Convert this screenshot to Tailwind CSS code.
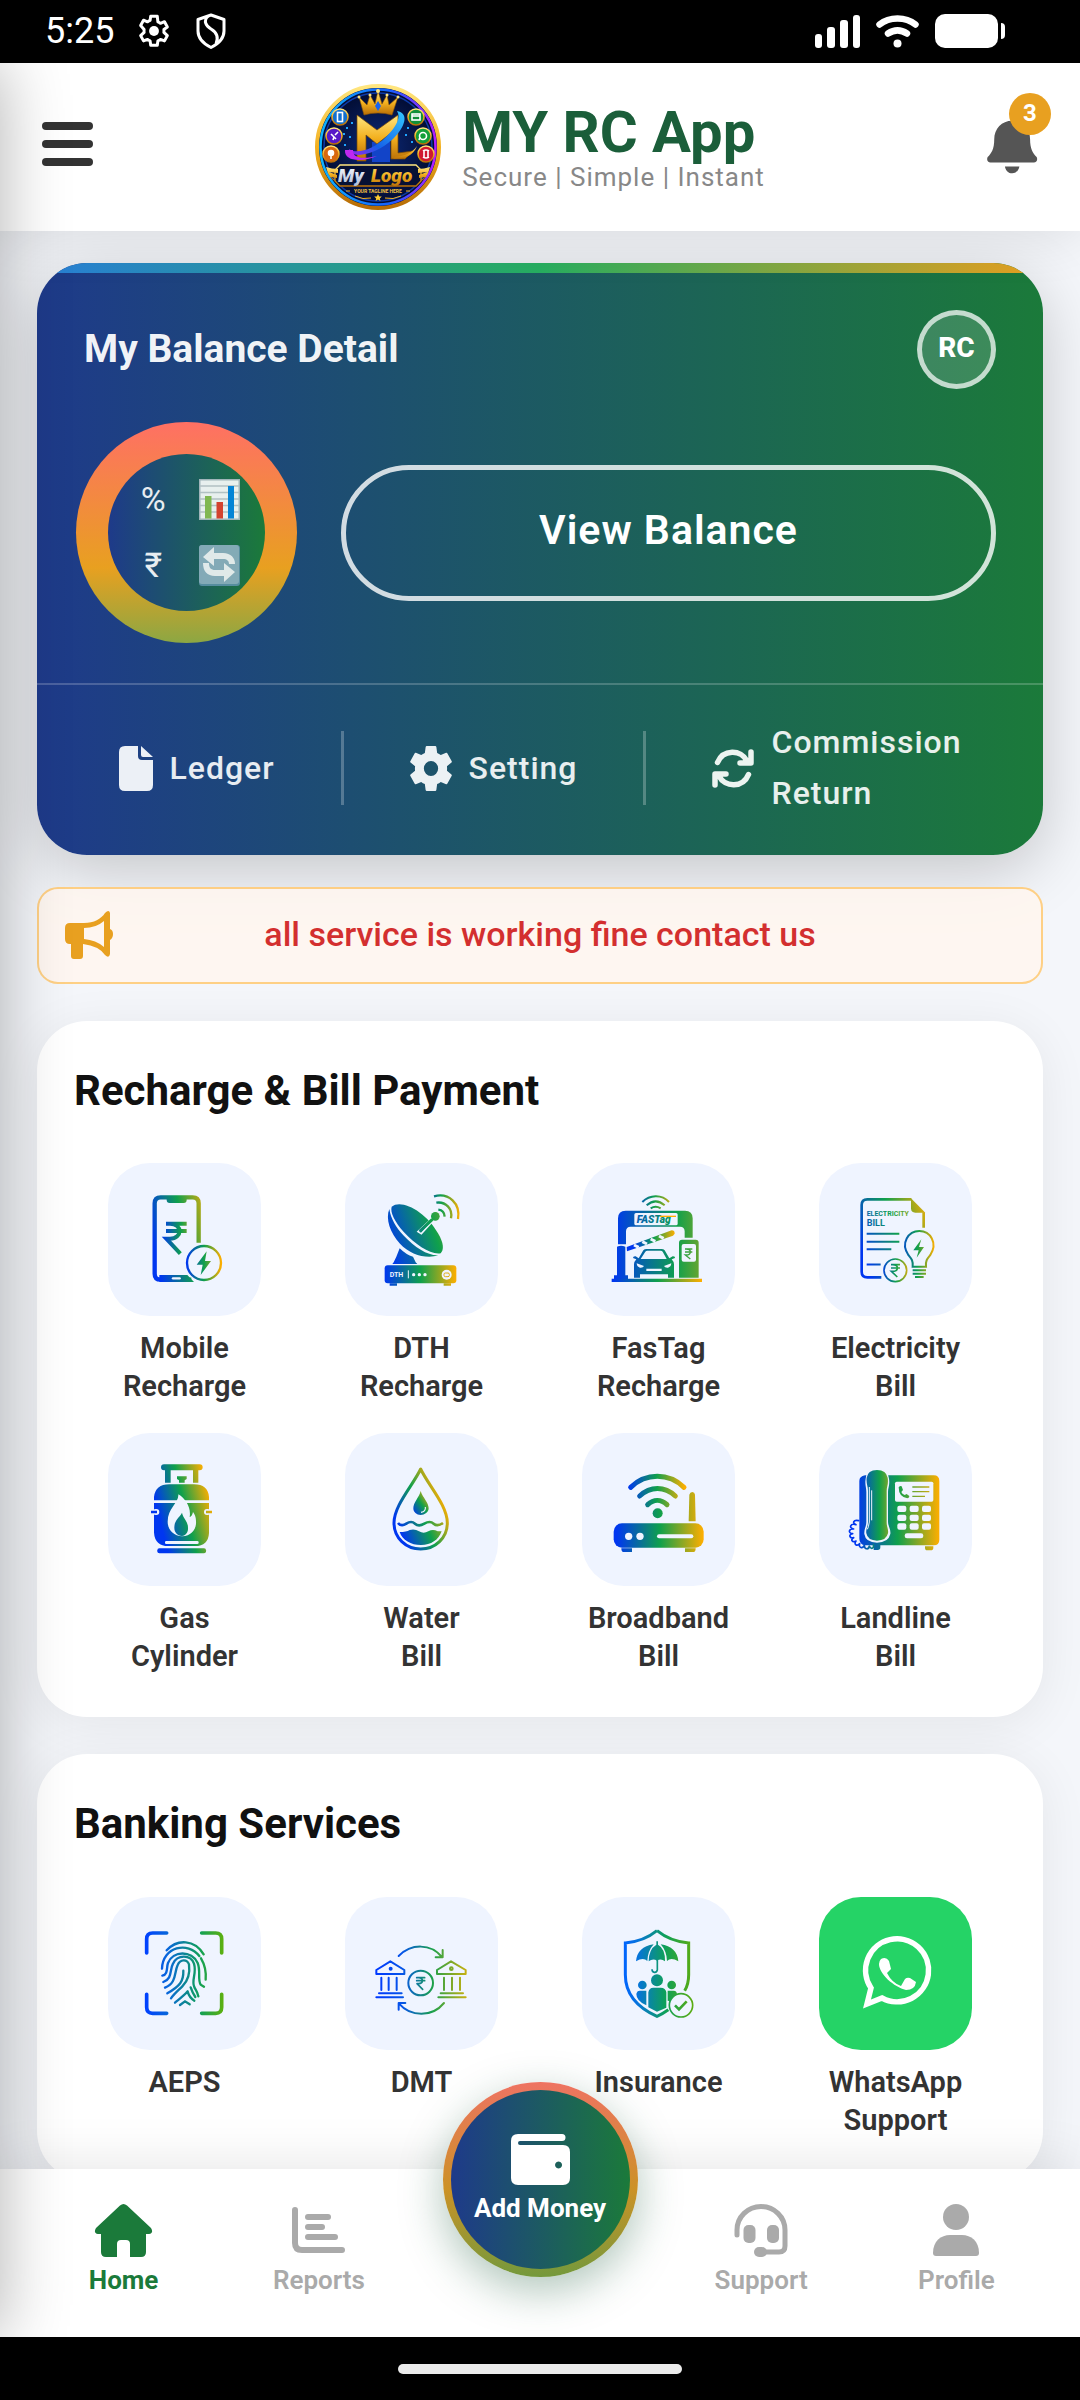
<!DOCTYPE html>
<html lang="en">
<head>
<meta charset="utf-8">
<meta name="viewport" content="width=device-width, initial-scale=1">
<title>MY RC App</title>
<script src="https://cdn.jsdelivr.net/npm/@tailwindcss/browser@4"></script>
</head>
<body class="bg-black font-['Roboto',sans-serif]">

<!-- Shared gradients -->
<svg class="absolute w-0 h-0" aria-hidden="true">
  <defs>
    <linearGradient id="brand"><stop offset="0" stop-color="#0036f0"/><stop offset=".5" stop-color="#0fa04c"/><stop offset="1" stop-color="#ffae00"/></linearGradient>
    <linearGradient id="gMobile" href="#brand" gradientUnits="userSpaceOnUse" x1="195" y1="330" x2="385" y2="290"/>
    <linearGradient id="gRupee" href="#brand" gradientUnits="userSpaceOnUse" x1="215" y1="0" x2="330" y2="0"/>
    <linearGradient id="gBolt" href="#brand" gradientUnits="userSpaceOnUse" x1="290" y1="0" x2="394" y2="0"/>
    <linearGradient id="gDish" href="#brand" gradientUnits="userSpaceOnUse" x1="890" y1="310" x2="1170" y2="220"/>
    <linearGradient id="gBox" href="#brand" gradientUnits="userSpaceOnUse" x1="885" y1="0" x2="1100" y2="0"/>
    <linearGradient id="gWave" href="#brand" gradientUnits="userSpaceOnUse" x1="1000" y1="0" x2="1110" y2="0"/>
    <linearGradient id="gToll" href="#brand" gradientUnits="userSpaceOnUse" x1="160" y1="0" x2="540" y2="0"/>
    <linearGradient id="gTollWave" href="#brand" gradientUnits="userSpaceOnUse" x1="220" y1="0" x2="345" y2="0"/>
    <linearGradient id="gTollBase" href="#brand" gradientUnits="userSpaceOnUse" x1="160" y1="0" x2="426" y2="0"/>
    <linearGradient id="gBill" href="#brand" gradientUnits="userSpaceOnUse" x1="905" y1="330" x2="1130" y2="250"/>
    <linearGradient id="gBulb" href="#brand" gradientUnits="userSpaceOnUse" x1="1020" y1="0" x2="1126" y2="0"/>
    <linearGradient id="gCoin" href="#brand" gradientUnits="userSpaceOnUse" x1="965" y1="0" x2="1055" y2="0"/>
    <linearGradient id="gGas" href="#brand" gradientUnits="userSpaceOnUse" x1="195" y1="240" x2="355" y2="200"/>
    <linearGradient id="gWater" href="#brand" gradientUnits="userSpaceOnUse" x1="915" y1="290" x2="1060" y2="230"/>
    <linearGradient id="gDrop" href="#brand" gradientUnits="userSpaceOnUse" x1="965" y1="270" x2="1025" y2="230"/>
    <linearGradient id="gNet" href="#brand" gradientUnits="userSpaceOnUse" x1="170" y1="0" x2="430" y2="0"/>
    <linearGradient id="gNetWave" href="#brand" gradientUnits="userSpaceOnUse" x1="205" y1="0" x2="375" y2="0"/>
    <linearGradient id="gPhone" href="#brand" gradientUnits="userSpaceOnUse" x1="890" y1="0" x2="1140" y2="0"/>
    <linearGradient id="gHandset" href="#brand" gradientUnits="userSpaceOnUse" x1="895" y1="0" x2="1025" y2="0"/>
    <linearGradient id="gFinger" gradientUnits="userSpaceOnUse" x1="345" y1="0" x2="578" y2="0"><stop offset="0" stop-color="#0040ff"/><stop offset=".3" stop-color="#0868d8"/><stop offset=".7" stop-color="#10a058"/><stop offset="1" stop-color="#5cb010"/></linearGradient>
    <linearGradient id="gDmt" gradientUnits="userSpaceOnUse" x1="1036" y1="0" x2="1310" y2="0"><stop offset="0" stop-color="#0038ff"/><stop offset=".3" stop-color="#0655e8"/><stop offset=".62" stop-color="#1aa04c"/><stop offset="1" stop-color="#c8b010"/></linearGradient>
    <linearGradient id="gIns" gradientUnits="userSpaceOnUse" x1="240" y1="0" x2="448" y2="0"><stop offset="0" stop-color="#0064ff"/><stop offset=".2" stop-color="#0673dc"/><stop offset=".6" stop-color="#0ea058"/><stop offset="1" stop-color="#5cac10"/></linearGradient>
    <linearGradient id="gold" x1="0" y1="0" x2="0" y2="1"><stop offset="0" stop-color="#ffe680"/><stop offset=".5" stop-color="#f3b01f"/><stop offset="1" stop-color="#b66c06"/></linearGradient>
    <linearGradient id="silver" x1="0" y1="0" x2="0" y2="1"><stop offset="0" stop-color="#ffffff"/><stop offset="1" stop-color="#a9b8d6"/></linearGradient>
    <linearGradient id="neon"><stop offset="0" stop-color="#10b4ff"/><stop offset=".6" stop-color="#1560ff"/><stop offset="1" stop-color="#b41cff"/></linearGradient>
    <linearGradient id="swoosh" x1="0" y1="1" x2="1" y2="0"><stop offset="0" stop-color="#a020f0"/><stop offset=".35" stop-color="#1560e8"/><stop offset="1" stop-color="#32c8ff"/></linearGradient>
    <radialGradient id="night"><stop offset="0" stop-color="#0c2a7a"/><stop offset="1" stop-color="#020a2c"/></radialGradient>
  </defs>
</svg>

<div class="relative flex h-screen flex-col overflow-hidden bg-[#f4f6fa]">

  <!-- Status bar -->
  <div class="relative z-30 flex h-[63px] shrink-0 items-center justify-between bg-black pl-[45px] pr-[75px] pb-px text-white">
    <div class="flex items-center">
      <span class="text-[36px] leading-10">5:25</span>
      <svg class="ml-[22px] h-9 w-9" viewBox="0 0 24 24" fill="none" stroke="#fff" stroke-width="2"><path d="M18.600 12.900a6.500 6.500 0 0 0 0-1.900l2.300-1.700-1.900-3.500-2.700 1.100a7 7 0 0 0-1.700-1L14.200 2.200H9.800l-.4 2.700a7 7 0 0 0-1.700 1L5 4.800 3.100 8.300 5.400 11a6.500 6.500 0 0 0 0 1.900l-2.300 2.200L5 18.600l2.700-1a7 7 0 0 0 1.700 1l.4 2.900h4.400l.4-2.900a7 7 0 0 0 1.700-1l2.700 1 1.900-3.500z" stroke-linejoin="round"/><circle cx="12" cy="12" r="3.300" fill="#fff" stroke="none"/></svg>
      <svg class="ml-6 h-9 w-[30px]" viewBox="0 0 30 36" fill="none" stroke="#fff" stroke-width="3" stroke-linejoin="round"><path d="M15 2 28 6.500V18c0 8-6 13-13 16.500C8 31 2 26 2 18V6.500z"/><path d="M12 3C7 8 10 13 15 16s8 8 5 15"/></svg>
    </div>
    <div class="flex items-center gap-4">
      <svg class="h-[33px] w-[45px]" viewBox="0 0 45 33" fill="#fff"><rect y="19" width="7" height="14" rx="3"/><rect x="12" y="12" width="8" height="21" rx="3"/><rect x="25" y="5" width="8" height="28" rx="3"/><rect x="38" width="7" height="33" rx="3"/></svg>
      <svg class="h-[33px] w-[43px]" viewBox="0 0 43 33" fill="none" stroke="#fff" stroke-width="6.500" stroke-linecap="round"><path d="M3.500 9.500c10-8 26-8 36 0M12 18.500c6-4 13-4 19 0"/><circle cx="21.500" cy="28.500" r="4" fill="#fff" stroke="none"/></svg>
      <svg class="h-[34px] w-[70px]" viewBox="0 0 70 34" fill="#fff"><rect width="63" height="34" rx="10"/><path d="M66 9q4 0 4 4v8q0 4-4 4z"/></svg>
    </div>
  </div>

  <!-- App header -->
  <header class="relative z-20 flex h-[168px] shrink-0 items-center justify-between bg-white px-[42px] shadow-[0_6px_50px_rgba(0,0,0,0.1)]">
    <button type="button" aria-label="Menu" class="flex w-[51px] flex-col gap-2.5 pb-1.5">
      <span class="h-2 rounded-full bg-[#333]"></span><span class="h-2 rounded-full bg-[#333]"></span><span class="h-2 rounded-full bg-[#333]"></span>
    </button>
    <a href="#" class="flex items-center gap-[21px]">
      <svg class="h-[126px] w-[126px]" viewBox="0 0 126 126" aria-hidden="true">
        <circle cx="63" cy="63" r="61" fill="url(#night)" stroke="url(#gold)" stroke-width="4"/>
        <circle cx="63" cy="63" r="57.500" fill="none" stroke="url(#neon)" stroke-width="2.500"/>
        <circle cx="63" cy="63" r="54" fill="none" stroke="#0d3aa8" stroke-width="1.500"/>
        <g fill="#1fa4ff"><path d="M31 43h2v2h-2zM36 38h2v2h-2zM28 49h2v2h-2zM34 52h2v2h-2zM92 43h2v2h-2zM96 57h2v2h-2zM29 60h2v2h-2zM90 50h2v2h-2z"/></g>
        <path d="M57 58h18v20H57z" fill="#1244c8"/>
        <path d="M49 31 44 13l8 8 3-10 5 9 3-13 4 13 5-9 2 10 9-8-6 18q-14-4-28 0z" fill="url(#gold)" stroke="#8f5604" stroke-width=".6"/>
        <path d="M63 17l3 5-3 5-3-5z" fill="#1864f0"/><g fill="#ffe680"><circle cx="44" cy="13" r="1.500"/><circle cx="55" cy="11" r="1.500"/><circle cx="63" cy="7" r="2"/><circle cx="72" cy="11" r="1.500"/><circle cx="83" cy="13" r="1.500"/></g>
        <path d="M42 31 62 46 83 31v38l15-2-8 8H76V49L62 60 51 51v26h-9z" fill="url(#gold)" stroke="#7a4a04" stroke-width=".7"/>
        <path d="M82 27c12 2 9 15-4 28-17 16-42 21-44 10 8 6 25 0 37-12 11-11 15-20 11-26z" fill="url(#swoosh)"/>
        <path d="M30 66c-1 12 18 12 32 6-12 3-25 3-24-6" fill="#c028f0"/>
        <path d="M78 75c12 0 20-3 24-13-5 7-12 10-22 11z" fill="url(#gold)"/>
        <g stroke="url(#gold)" stroke-width="1.500"><circle cx="25" cy="33" r="8" fill="#1270d0"/><circle cx="19" cy="52" r="8" fill="#5818c8"/><circle cx="16" cy="70" r="8" fill="#d86810"/><circle cx="101" cy="33" r="8" fill="#129038"/><circle cx="108" cy="52" r="8" fill="#12a038"/><circle cx="111" cy="70" r="8" fill="#d01830"/></g>
        <g fill="none" stroke="#fff" stroke-width="1.600"><rect x="22.500" y="28.500" width="5" height="9"/><path d="M16 50l5 5M18 56l1-3M20 51l3-3"/><circle cx="16" cy="69" r="2.500" fill="#fff"/><path d="M16 71v4"/><rect x="97" y="30" width="8" height="6"/><path d="M97 32h8"/><circle cx="108" cy="52" r="3.500"/><path d="M104 56l1-3"/><path d="M108 67q3-2 6 0M108 73q3 2 6 0M109 67v6M113 67v6"/></g>
        <path d="M25 81h76l5 5v11l-5 5H25l-5-5V86z" fill="#061034" stroke="url(#gold)" stroke-width="1.300"/>
        <path d="M11 83q6 2 12 2v4l-9-1 8 3v3l-6-1 6 5q-8-2-11-15zM115 83q-6 2-12 2v4l9-1-8 3v3l6-1-6 5q8-2 11-15z" fill="url(#gold)"/>
        <text x="23" y="98" font-family="Roboto,sans-serif" font-size="19" font-weight="900" font-style="italic" fill="url(#silver)">My</text>
        <text x="56" y="98" font-family="Roboto,sans-serif" font-size="19" font-weight="900" font-style="italic" fill="url(#gold)">Logo</text>
        <text x="63" y="109" text-anchor="middle" font-family="Roboto,sans-serif" font-size="5" font-weight="700" fill="#f3c040">YOUR TAGLINE HERE</text>
        <path d="M31 107h4M91 107h4M40 112q8 4 16 2M86 112q-8 4-16 2" stroke="#f3b01f" fill="none"/><path d="M63 110l1.200 2.400 2.600.2-2 1.800.6 2.600-2.400-1.400-2.400 1.400.6-2.600-2-1.800 2.600-.2z" fill="#ffcb30"/>
      </svg>
      <span class="flex flex-col">
        <span class="text-[58px] leading-[60px] font-bold text-[#1b5e3a]">MY RC App</span>
        <span class="text-[26px] leading-[30px] tracking-[1px] text-[#888]">Secure | Simple | Instant</span>
      </span>
    </a>
    <button type="button" aria-label="Notifications, 3 new" class="relative w-[51px]">
      <svg class="h-[54px] w-[51px]" viewBox="1300 358 148 163" preserveAspectRatio="none" fill="#555"><path d="M1373 360c-30 0-52 24-52 56 0 30-8 42-19 54-4 8 0 16 8 16h126c8 0 12-8 8-16-12-14-19-26-19-54 0-32-22-56-52-56zM1352 498h42c-2 12-10 21-21 21s-19-9-21-21z"/></svg>
      <span class="absolute -top-[27px] -right-[13px] flex h-[42px] w-[42px] items-center justify-center rounded-full bg-[#e8a020] pb-0.5 text-2xl font-bold text-white">3</span>
    </button>
  </header>

  <!-- Scrolling content -->
  <main class="min-h-0 flex-1 overflow-y-auto px-[37px] pt-8 [scrollbar-width:none]">

    <section class="overflow-hidden rounded-[50px] bg-[linear-gradient(90deg,#1e3a8a,#1b7a3a)] shadow-[0_16px_64px_rgba(0,0,0,0.2)]">
      <div class="h-[10px] bg-[linear-gradient(90deg,#2980d9,#27ae60,#e8a020)]"></div>
      <div class="flex items-center justify-between px-[47px] pt-[37px]">
        <h1 class="text-[39px] font-bold text-white/95">My Balance Detail</h1>
        <span class="flex h-[79px] w-[79px] items-center justify-center rounded-full border-[5px] border-white/70 bg-white/15 pb-1 text-[28px] font-extrabold text-white">RC</span>
      </div>
      <div class="flex items-center gap-11 pt-[33px] pr-[47px] pb-10 pl-[39px]">
        <div class="flex h-[221px] w-[221px] shrink-0 items-center justify-center rounded-full bg-[linear-gradient(180deg,#ff7064,#e8a020_66%,#8ca743)]">
          <div class="grid h-[157px] w-[157px] grid-cols-2 place-items-center rounded-full bg-[linear-gradient(90deg,#1e3a8a,#1b7a3a)] px-3 py-3 text-[34px] text-white/90">
            <span>%</span>
            <svg class="h-[41px] w-[41px] opacity-90" viewBox="0 0 41 41"><path d="M0 0h41v41H0z" fill="#b0bec5"/><path d="M1.500 1.500h38v38h-38z" fill="#fff"/><path d="M1 7h39M1 13.500h39M1 20h39M1 26.500h39M1 33h39" stroke="#c3ccd0" stroke-width="1.300"/><path d="M6 17h6.500v22.500H6z" fill="#8cc152"/><path d="M17.500 23H24v16.500h-6.500z" fill="#e8402c"/><path d="M29 7h6v32.500h-6z" fill="#0288e5"/></svg>
            <span>₹</span>
            <svg class="h-[41px] w-[41px] opacity-90" viewBox="0 0 41 41"><rect width="41" height="41" rx="3" fill="#5d92a8"/><rect width="40" height="39" rx="3" fill="#8fb2c2"/><path d="M4 12 15 2v6h9c8 0 12 5 12 11h-6c0-3-2-5-6-5h-9v7z" fill="#f6f8fa"/><path d="M36 27 25 37v-6h-9C8 31 4 26 4 18h6c0 5 2 7 6 7h9v-7z" fill="#f6f8fa"/></svg>
          </div>
        </div>
        <button type="button" class="h-[136px] flex-1 rounded-full border-[5px] border-white/80 pb-1 text-[41px] font-semibold tracking-[1px] text-white">View Balance</button>
      </div>
      <div class="flex h-[172px] items-center justify-center border-t-2 border-white/20 pb-1 text-[32px] leading-[51px] font-medium tracking-[1px] text-white/90">
        <a href="#" class="flex items-center gap-[17px] px-[66px]">
          <svg class="h-[45px] w-[34px]" viewBox="0 0 34 45" fill="#ecf0f6"><path d="M6 0h13v10q0 4 4 4h11v25q0 6-6 6H6q-6 0-6-6V6q0-6 6-6zM22 0l12 11H24q-2 0-2-2z"/></svg>
          <span>Ledger</span>
        </a>
        <span class="h-[74px] w-[3px] bg-white/25"></span>
        <a href="#" class="flex items-center gap-[17px] px-[66px]">
          <svg class="h-[45px] w-[42px]" viewBox="2.600 2.400 18.800 19.200" preserveAspectRatio="none" fill="#ecf1f4"><path d="M19.140 12.940c.04-.3.060-.61.060-.94 0-.32-.02-.64-.07-.94l2.030-1.580c.18-.14.23-.41.12-.61l-1.920-3.320c-.12-.22-.37-.29-.59-.22l-2.390.96c-.5-.38-1.030-.7-1.620-.94l-.36-2.540c-.04-.24-.24-.41-.48-.41h-3.840c-.24 0-.43.17-.47.41l-.36 2.540c-.59.24-1.130.57-1.620.94l-2.390-.96c-.22-.08-.47 0-.59.22L2.740 8.870c-.12.21-.08.47.12.61l2.030 1.580c-.05.3-.09.63-.09.94s.02.64.07.94l-2.030 1.580c-.18.14-.23.41-.12.61l1.920 3.320c.12.22.37.29.59.22l2.390-.96c.5.38 1.030.7 1.620.94l.36 2.540c.05.24.24.41.48.41h3.840c.24 0 .44-.17.47-.41l.36-2.540c.59-.24 1.130-.56 1.620-.94l2.390.96c.22.08.47 0 .59-.22l1.920-3.320c.12-.22.07-.47-.12-.61l-2.010-1.580zM12 15.200a3.200 3.200 0 1 1 0-6.400 3.200 3.200 0 0 1 0 6.400z"/></svg>
          <span>Setting</span>
        </a>
        <span class="h-[74px] w-[3px] bg-white/25"></span>
        <a href="#" class="flex items-center gap-[17px] px-[66px]">
          <svg class="h-[39px] w-[42px]" viewBox="0 0 42 39" fill="none" stroke="#ecf4f0" stroke-width="5.500" stroke-linecap="round" stroke-linejoin="round"><path d="M5.500 13.500C11 0 29 0 35 12M28 14h11V3M36.500 25.500C31 39 13 39 7 27M14 25H3v11"/></svg>
          <span>Commission<br>Return</span>
        </a>
      </div>
    </section>

    <div class="mt-8 flex h-[97px] items-center rounded-[21px] border-2 border-[#ffa000]/45 bg-[#fff6ee]/85 px-[26px] pb-0.5">
      <svg class="h-12 w-12 shrink-0" viewBox="0 0 48 48" fill="#e8a020"><path fill-rule="evenodd" d="M5 12h14C29 12 36 8 40 2q4-4 5 0v16q3 1 3 5t-3 6v14q-1 5-5 1-6-9-22-11v12q0 3-3 3H9q-3 0-3-3V33H5q-5 0-5-5V17q0-5 5-5zM19 17v11q12 1 20 8V10q-8 7-20 7z"/></svg>
      <p class="flex-1 pr-12 text-center text-[34px] font-medium text-[#d32f2f]">all service is working fine contact us</p>
    </div>

    <section class="mt-[37px] rounded-[50px] bg-white px-[29px] pt-[45px] pb-[42px] shadow-[0_8px_50px_rgba(0,0,0,0.07)]">
      <h2 class="px-2 text-[42px] leading-[50px] font-bold text-[#111]">Recharge &amp; Bill Payment</h2>
      <div class="mt-[47px] grid grid-cols-4 gap-y-7 text-center text-[29px] leading-[38px] font-semibold text-[#333]">

        <a href="#" class="flex flex-col items-center gap-[13px]">
          <span class="h-[153px] w-[153px] rounded-[42px] bg-[#eff4ff]">
            <svg viewBox="54 69 459 459" fill="none" stroke="url(#gMobile)" stroke-width="13">
              <path d="M326 308V190q0-18-18-18H212q-18 0-18 18v211q0 18 18 18h92"/><path d="M230 170h60v10q0 9-9 9h-42q-9 0-9-9zM208 405h84l20 21H208z" fill="url(#gMobile)" stroke="none"/><path d="M249 415h20" stroke="#eff4ff" stroke-width="7" stroke-linecap="round"/>
              <g stroke="url(#gRupee)" stroke-width="12"><path d="M228 251h62M228 273h62M240 251c38 0 38 45 0 45h-11l42 45"/></g>
              <circle cx="342" cy="369" r="51" stroke="url(#gBolt)" stroke-width="7" fill="#eff4ff"/><path d="M350 334 320 374h18l-6 31 31-42h-18z" fill="url(#gBolt)" stroke="none"/>
            </svg>
          </span>
          <span>Mobile<br>Recharge</span>
        </a>

        <a href="#" class="flex flex-col items-center gap-[13px]">
          <span class="h-[153px] w-[153px] rounded-[42px] bg-[#eff4ff]">
            <svg viewBox="766 69 459 459" fill="url(#gDish)">
              <path d="M906 200C935 175 1010 215 1045 280c18 30 18 50 8 60-30 5-75-25-110-63-28-32-42-60-37-77zM899 207c4 28 20 55 42 79 35 38 75 62 105 60-35 12-85-2-115-35-30-32-44-75-32-104z"/>
              <path d="M930 325q20 20 40 25l8 17 5 5h-75l4-5 8-17z"/>
              <path d="M985 275l40-38q-3-20 12-22 14 2 12 16-4 14-18 10l-36 40z" stroke="#eff4ff" stroke-width="5"/><circle cx="1037" cy="229" r="13"/><path d="M990 274l38-36" stroke="url(#gDish)" stroke-width="9"/>
              <g fill="none" stroke="url(#gWave)" stroke-width="7"><path d="M1046 209q18 2 19 21M1040 188c28-4 50 18 44 47M1033 169c45-12 80 22 72 68"/></g>
              <g fill="url(#gBox)"><rect x="885" y="376" width="215" height="54" rx="9"/><path d="M900 430h22v7h-22zM1062 430h22v7h-22z"/></g>
              <text x="900" y="411" font-family="Roboto,sans-serif" font-size="21" font-weight="700" fill="#eff4ff">DTH</text>
              <path d="M956 391v24" stroke="#eff4ff" stroke-width="3"/><g fill="#eff4ff"><circle cx="972" cy="404" r="5"/><circle cx="989" cy="404" r="5"/><circle cx="1006" cy="404" r="5"/><circle cx="1071" cy="404" r="15"/></g><rect x="1063" y="399" width="16" height="11" rx="4" fill="none" stroke="#e0ac10" stroke-width="3"/>
            </svg>
          </span>
          <span>DTH<br>Recharge</span>
        </a>

        <a href="#" class="flex flex-col items-center gap-[13px]">
          <span class="h-[153px] w-[153px] rounded-[42px] bg-[#eff4ff]">
            <svg viewBox="66 69 459 459" fill="url(#gToll)">
              <path d="M174 313V235q0-23 23-23h178q23 0 23 23v58h-24v-19q0-14-14-14H212q-14 0-14 14v39z"/>
              <rect x="223" y="219" width="130" height="37" rx="5" fill="#eff4ff"/>
              <text x="230" y="248" font-family="Roboto,sans-serif" font-size="31" font-weight="900" font-style="italic" fill="url(#gToll)">FASTag</text><path d="M300 229h48" stroke="#ffae00" stroke-width="4"/>
              <g fill="none" stroke="url(#gTollWave)" stroke-width="6"><path d="M272 205q15-10 30 0M260 196q27-24 54 0M247 186c22-22 58-24 80 0"/></g>
              <path d="M171 320q12-6 25 0v86h8v11h-42v-11h9zM357 308q0-9 9-9h41q9 0 9 9v105h-59z"/><rect x="365" y="312" width="43" height="53" rx="6" fill="#eff4ff"/>
              <path d="M375 327h22M375 336h22M379 327c16 0 16 18 0 18h-3l15 12" fill="none" stroke="url(#gToll)" stroke-width="4"/>
              <path d="M200 321 335 271q9 0 9 10l-5 6-138 47z" fill="url(#gTollWave)"/><path d="M222 315l14 7M247 305l14 7M272 297l14 7M297 288l14 7" stroke="#eff4ff" stroke-width="9"/>
              <path fill-rule="evenodd" d="M236 355l14-24q3-4 10-4h44q7 0 10 4l14 24 10-6q8 0 7 5l-10 4q8 8 7 18v37h-18v-10h-84v10h-18v-37q-1-10 7-18l-10-4q0-6 8-5zM242 357h78l-12-22q-2-3-6-3h-40q-4 0-6 3z"/><path d="M259 386h46v7h-46zM230 370l22 8q-3 6-12 5-9-2-10-13zM334 370l-22 8q3 6 12 5 9-2 10-13z" fill="#eff4ff"/>
              <path d="M155 416h271v10H155z" fill="url(#gTollBase)"/>
            </svg>
          </span>
          <span>FasTag<br>Recharge</span>
        </a>

        <a href="#" class="flex flex-col items-center gap-[13px]">
          <span class="h-[153px] w-[153px] rounded-[42px] bg-[#eff4ff]">
            <svg viewBox="779 69 459 459" fill="none" stroke="url(#gBill)" stroke-width="8">
              <path d="M1056 178H924q-17 0-17 17v200q0 17 17 17h42M1093 217v46"/><path d="M1055 175l43 43h-30q-13 0-13-13z" fill="url(#gBill)" stroke="none"/>
              <g stroke-width="6"><path d="M922 281.500l98 .1M922 305.500l98 .1M922 328l74 .1M922 373.500l42 .1"/></g>
              <g stroke="none" font-family="Roboto,sans-serif" font-weight="700" fill="url(#gBill)"><text x="922" y="228" font-size="21">ELECTRICITY</text><text x="922" y="257" font-size="27">BILL</text></g>
              <g stroke="url(#gBulb)" stroke-width="6"><path d="M1060 380c2-18-4-24-13-35-24-36 0-72 33-72s56 36 33 72c-9 11-15 17-13 35z"/><path d="M1060 391h40M1060 401h40M1067 411h26"/><path d="M1086 298l-24 33h16l-6 22 22-32h-15z" fill="url(#gBulb)" stroke="none"/></g>
              <g stroke="url(#gCoin)" stroke-width="5"><circle cx="1008" cy="391" r="34" fill="#eff4ff"/><path d="M995 374h27M995 384h27M1000 374c20 0 18 20 0 20h-4l18 17"/></g>
            </svg>
          </span>
          <span>Electricity<br>Bill</span>
        </a>

        <a href="#" class="flex flex-col items-center gap-[13px]">
          <span class="h-[153px] w-[153px] rounded-[42px] bg-[#eff4ff]">
            <svg viewBox="54 38 459 459" fill="url(#gGas)">
              <path d="M222 132h107q9 0 9 9t-9 9h-4v37h-16v-37h-67v37h-17v-37h-3q-9 0-9-9t9-9zM261 168h29v8l-6 4v7h-17v-7l-6-4zM192 240v-10q4-38 46-38h74q42 0 45 38v10z"/><path d="M192 248h165v89q-2 40-42 40h-80q-40 0-43-40z"/>
              <path d="M265 222c2 25-32 42-32 82 0 25 17 42 44 44 27-2 43-20 41-46 0-12-4-20-9-27-2 10-5 13-10 15 5-28-12-55-34-68z" fill="#eff4ff"/><path d="M276 277c-8 15-23 22-23 45 0 14 9 23 23 25 12-2 19-12 18-25 0-20-14-27-18-45z"/>
              <rect x="225" y="362" width="101" height="9" rx="4" fill="#eff4ff"/><rect x="202" y="384" width="146" height="15" rx="6"/>
              <g fill="#eff4ff"><rect x="188" y="266" width="20" height="18" rx="9"/><rect x="342" y="266" width="20" height="18" rx="9"/></g><path d="M183 271h18v8h-18zM348 271h18v8h-18z"/>
            </svg>
          </span>
          <span>Gas<br>Cylinder</span>
        </a>

        <a href="#" class="flex flex-col items-center gap-[13px]">
          <span class="h-[153px] w-[153px] rounded-[42px] bg-[#eff4ff]">
            <svg viewBox="766 38 459 459" fill="url(#gWater)">
              <path d="M993 146C970 195 913 255 913 308c0 45 36 78 80 78s80-33 80-78c0-53-57-113-80-162z" fill="none" stroke="url(#gWater)" stroke-width="9" stroke-linejoin="round"/>
              <path d="M993 212c-5 20-22 34-22 52 0 12 10 20 22 20s24-8 24-20c0-18-18-32-24-52z" fill="url(#gDrop)"/><path d="M1007 260q2 14-13 16" fill="none" stroke="#eff4ff" stroke-width="3.500"/>
              <path d="M925 308q10 12 25 2t26 0 28 0 28 0 28-2" fill="none" stroke="url(#gWater)" stroke-width="8"/><path d="M930 335q20 0 30-6 16-4 28 4 14 8 28 0 14-8 28 0h12c-9 26-32 41-62 41s-56-14-64-39z"/>
            </svg>
          </span>
          <span>Water<br>Bill</span>
        </a>

        <a href="#" class="flex flex-col items-center gap-[13px]">
          <span class="h-[153px] w-[153px] rounded-[42px] bg-[#eff4ff]">
            <svg viewBox="66 38 459 459" fill="url(#gNet)">
              <g fill="none" stroke="url(#gNetWave)" stroke-width="15" stroke-linecap="round"><path d="M212 201c46-44 114-44 160 0M239 227c32-30 75-30 107 0M263 253c18-17 40-17 58 0"/></g><circle cx="293" cy="279" r="15"/>
              <path d="M388 223q2-8 9-8t8 8l2 80h-21z"/><rect x="161" y="309" width="270" height="73" rx="25"/><path d="M184 384h32v11h-26q-6 0-6-11zM375 384h32q0 11-6 11h-26z"/><g fill="#eff4ff"><circle cx="206" cy="348" r="11"/><circle cx="240" cy="348" r="11"/><rect x="291" y="342" width="109" height="12" rx="6"/></g>
            </svg>
          </span>
          <span>Broadband<br>Bill</span>
        </a>

        <a href="#" class="flex flex-col items-center gap-[13px]">
          <span class="h-[153px] w-[153px] rounded-[42px] bg-[#eff4ff]">
            <svg viewBox="779 38 459 459" fill="url(#gPhone)">
              <path d="M985 165h138q17 0 17 17v176q0 17-17 17H918q-18-3-18-20V182q0-14 17-17zM943 375h20v6q0 8-8 8h-12zM1097 378h25v4q0 8-8 8h-10q-7 0-7-8z"/>
              <path d="M919 175q3-29 34-30 32 1 36 30c3 20-3 25-3 40v90c0 12 9 22 7 36q-6 26-40 26t-38-26c-1-16 6-22 6-36v-90c0-15-5-22-2-40z" fill="#eff4ff"/>
              <path d="M922 172q3-22 31-23 28 1 32 23c3 20-3 25-3 40v95c0 12 6 20 4 32q-5 22-33 22t-32-22c-2-14 5-20 5-34v-93c0-15-6-22-4-40z" fill="url(#gHandset)"/><path d="M930 200v105q-3 18-6 22M937 210v90" fill="none" stroke="#eff4ff" stroke-width="3"/>
              <rect x="1007" y="184" width="115" height="60" rx="5" fill="#eff4ff"/>
              <path d="M1018 201q5-6 9-3l4 11-5 6q2 6 10 9l6-3 8 6q1 6-6 7-26-4-26-33z"/><path d="M1059 200l51 .1M1059 214l51 .1M1059 228l38 .1" stroke="url(#gPhone)" stroke-width="4"/>
              <g fill="#eff4ff"><rect x="1014" y="256" width="27" height="19" rx="6"/><rect x="1051" y="256" width="27" height="19" rx="6"/><rect x="1088" y="256" width="27" height="19" rx="6"/><rect x="1014" y="283" width="27" height="19" rx="6"/><rect x="1051" y="283" width="27" height="19" rx="6"/><rect x="1088" y="283" width="27" height="19" rx="6"/><rect x="1014" y="309" width="27" height="19" rx="6"/><rect x="1051" y="309" width="27" height="19" rx="6"/><rect x="1088" y="309" width="27" height="19" rx="6"/><rect x="1036" y="339" width="56" height="15" rx="7"/></g>
              <path d="M898 301c-16-4-20 8-8 12-18-5-22 11-7 13-16-1-17 13-3 14-13 2-10 15 3 12-11 6-4 16 7 10-8 10 3 17 11 8-4 13 9 16 14 5 0 13 13 14 15 2 4 11 15 8 12-4" fill="none" stroke="url(#gHandset)" stroke-width="5" stroke-linejoin="round" stroke-linecap="round"/>
            </svg>
          </span>
          <span>Landline<br>Bill</span>
        </a>
      </div>
    </section>

    <section class="mt-[37px] rounded-[50px] bg-white px-[29px] pt-[45px] pb-[42px] shadow-[0_8px_50px_rgba(0,0,0,0.07)]">
      <h2 class="px-2 text-[42px] leading-[50px] font-bold text-[#111]">Banking Services</h2>
      <div class="mt-12 grid grid-cols-4 items-start gap-y-7 text-center text-[29px] leading-[38px] font-semibold text-[#333]">

        <a href="#" class="flex flex-col items-center gap-[13px]">
          <span class="h-[153px] w-[153px] rounded-[42px] bg-[#eff4ff]">
            <svg viewBox="233 471 459 459" fill="none" stroke="url(#gFinger)" stroke-linecap="round">
              <path d="M349 639v-42q0-18 18-18h42M514 579h42q18 0 18 18v42M349 763v39q0 18 18 18h42M514 820h42q18 0 18-18v-39" stroke-width="11"/>
              <g stroke-width="7"><path d="M409 631c32-35 84-33 111 12M395 686c2-66 78-83 112-38M512 655c12 20 16 40 14 64M396 707c18-3 12-25 17-38 14-38 72-38 89 0 10 25-1 50 9 65l10 6M399 726c28-10 18-35 29-55 13-28 53-28 63 0 9 30-9 50 1 70 3 8 8 10 12 28M404 743c36-15 27-45 38-68 8-18 28-18 34-2 4 30-4 50-20 66-14 14-24 22-34 36M411 760c38-22 49-36 48-68M434 788c12-10 26-20 38-34M472 755q5 18 20 27M481 742q5 15 14 29M449 795l15-11 14 9"/></g>
            </svg>
          </span>
          <span>AEPS</span>
        </a>

        <a href="#" class="flex flex-col items-center gap-[13px]">
          <span class="h-[153px] w-[153px] rounded-[42px] bg-[#eff4ff]">
            <svg viewBox="945 471 459 459" fill="none" stroke="url(#gDmt)" stroke-width="6" stroke-linecap="round" stroke-linejoin="round">
              <path d="M1106 648c38-38 96-38 130 3M1238 630v22h-21M1242 789c-36 44-100 42-135 2M1106 809v-20h20"/>
              <path d="M1039 690l42-26 42 26v12h-84zM1054 713v37M1076 713v37M1100 713v37M1047 760l68 .1M1039 772l80 .1"/><circle cx="1082" cy="686" r="3"/>
              <path d="M1221 690l42-26 44 26v12h-86zM1242 713v37M1266 713v37M1290 713v37M1232 760l67 .1M1225 772l82 .1"/><circle cx="1264" cy="686" r="4"/>
              <circle cx="1172" cy="729" r="37"/><path d="M1160 713h24M1160 722h24M1166 713c16 0 14 18 0 18h-5l17 17" stroke-width="5"/>
            </svg>
          </span>
          <span>DMT</span>
        </a>

        <a href="#" class="flex flex-col items-center gap-[13px]">
          <span class="h-[153px] w-[153px] rounded-[42px] bg-[#eff4ff]">
            <svg viewBox="115 471 459 459" fill="url(#gIns)">
              <path d="M340 572c-27 22-60 34-95 37v95c0 60 40 100 95 125 14-6 24-13 34-20M340 572c27 22 60 34 95 37v95q0 28-12 48" fill="none" stroke="url(#gIns)" stroke-width="9"/>
              <path d="M338 604h5v10q22 12 21 50-12-10-24-2-12-8-25 2 0-36 23-50zM330 613q-18 20-19 50-12-12-34 1 4-44 53-51zM351 613q18 20 19 50 12-12 34 1-4-44-53-51z"/><path d="M341 658v32q-2 8-9 7-7-1-7-9" fill="none" stroke="url(#gIns)" stroke-width="5"/>
              <circle cx="340" cy="721" r="18"/><circle cx="296" cy="735" r="13"/><circle cx="384" cy="735" r="13"/><path d="M314 757q2-14 15-14h22q15 0 17 14v46l-28 12-26-13zM278 762q2-10 10-10h20v44q-30-13-30-34zM372 752h18q10 0 10 12l-20 20-8-2z"/>
              <circle cx="412" cy="796" r="35" fill="#eff4ff" stroke="url(#gIns)" stroke-width="5"/><path d="M394 796l12 12 23-24" fill="none" stroke="url(#gIns)" stroke-width="8"/>
            </svg>
          </span>
          <span>Insurance</span>
        </a>

        <a href="#" class="flex flex-col items-center gap-[13px]">
          <span class="h-[153px] w-[153px] rounded-[42px] bg-[#25d366]">
            <svg viewBox="0 0 153 153" fill="none">
              <path d="M48 107 52 91A31.500 31.500 0 1 1 63 101z" stroke="#fff" stroke-width="5.500"/>
              <path d="M62 62q5-3 8 2l2 8-4 4q5 10 14 13l4-7q2-2 5-1l6 4q-1 8-10 8C75 90 60 77 60 67q0-3 2-5z" fill="#fff"/>
            </svg>
          </span>
          <span>WhatsApp<br>Support</span>
        </a>
      </div>
    </section>
  </main>

  <!-- Bottom navigation -->
  <nav class="relative z-10 flex h-[168px] shrink-0 items-center bg-white px-[26px] text-[26px] leading-[30px] font-semibold text-[#aaa] shadow-[0_-4px_50px_rgba(0,0,0,0.1)]">
    <a href="#" aria-current="page" class="flex flex-1 flex-col items-center gap-2 pb-2 font-bold text-[#1b7a3a]">
      <svg class="h-[53px] w-[59px]" viewBox="0 0 59 53" fill="currentColor"><path d="M26 1.500q3.500-3 7 0L57 24q3 5-2 6h-3v18q0 5-5 5H36V40q0-4-4-4h-5q-4 0-4 4v13H12q-5 0-5-5V30H4q-5-1-2-6z"/></svg>
      <span>Home</span>
    </a>
    <a href="#" class="flex flex-1 flex-col items-center gap-2 pb-2">
      <svg class="h-[53px] w-[53px]" viewBox="0 -3 53 53" fill="currentColor"><path d="M3 3v33q0 7 7 7h40" fill="none" stroke="currentColor" stroke-width="6" stroke-linecap="round"/><rect x="13" y="7" width="26" height="6" rx="3"/><rect x="13" y="17" width="20" height="6" rx="3"/><rect x="13" y="27" width="33" height="6" rx="3"/></svg>
      <span>Reports</span>
    </a>
    <div class="flex w-[247px] justify-center">
      <button type="button" class="mb-[147px] h-[195px] w-[195px] rounded-full bg-[linear-gradient(180deg,#ee7362,#cc9226_55%,#74993c)] p-2 shadow-[0_14px_44px_rgba(27,90,58,0.35)]">
        <span class="flex h-full flex-col items-center rounded-full bg-[linear-gradient(90deg,#1e3a8a,#1b7a3a)] pt-11 text-[26px] leading-[30px] font-bold text-white">
          <svg class="mb-2 h-[51px] w-[59px]" viewBox="0 0 59 51" fill="#fff"><path fill-rule="evenodd" d="M7 0h44a3.500 3.500 0 0 1 0 7H9a2 2 0 0 0 0 4h43q7 0 7 7v26q0 7-7 7H7q-7 0-7-7V7q0-7 7-7zM47.500 27.500a3.500 3.500 0 1 0 .1 0z"/></svg>
          <span class="whitespace-nowrap">Add Money</span>
        </span>
      </button>
    </div>
    <a href="#" class="flex flex-1 flex-col items-center gap-2 pb-2">
      <svg class="h-[53px] w-[54px]" viewBox="0 0 54 53" fill="currentColor"><path d="M3 31v-5a24 23.500 0 0 1 48 0v16q0 6-6 6H30" fill="none" stroke="currentColor" stroke-width="5" stroke-linecap="round"/><rect x="9.500" y="21" width="12" height="18" rx="5"/><rect x="33" y="21" width="12" height="18" rx="5"/><rect x="20" y="43" width="13" height="10" rx="5"/></svg>
      <span>Support</span>
    </a>
    <a href="#" class="flex flex-1 flex-col items-center gap-2 pb-2">
      <svg class="h-[53px] w-[46px]" viewBox="0 0 46 53" fill="currentColor"><circle cx="23" cy="13" r="13"/><path d="M0 49c0-12 8-18 17-18h12c9 0 17 6 17 18q0 3-3 3H3q-3 0-3-3z"/></svg>
      <span>Profile</span>
    </a>
  </nav>

  <!-- Closed side drawer, its shadow reaches over the left edge -->
  <aside class="pointer-events-none absolute top-[63px] bottom-[63px] right-full z-20 w-80 shadow-[0_0_64px_rgba(0,0,0,0.3)]"></aside>

  <!-- Gesture bar -->
  <div class="relative z-30 flex h-[63px] shrink-0 items-center justify-center bg-black">
    <span class="h-[10px] w-[284px] rounded-full bg-[#ebebeb]"></span>
  </div>
</div>
</body>
</html>
